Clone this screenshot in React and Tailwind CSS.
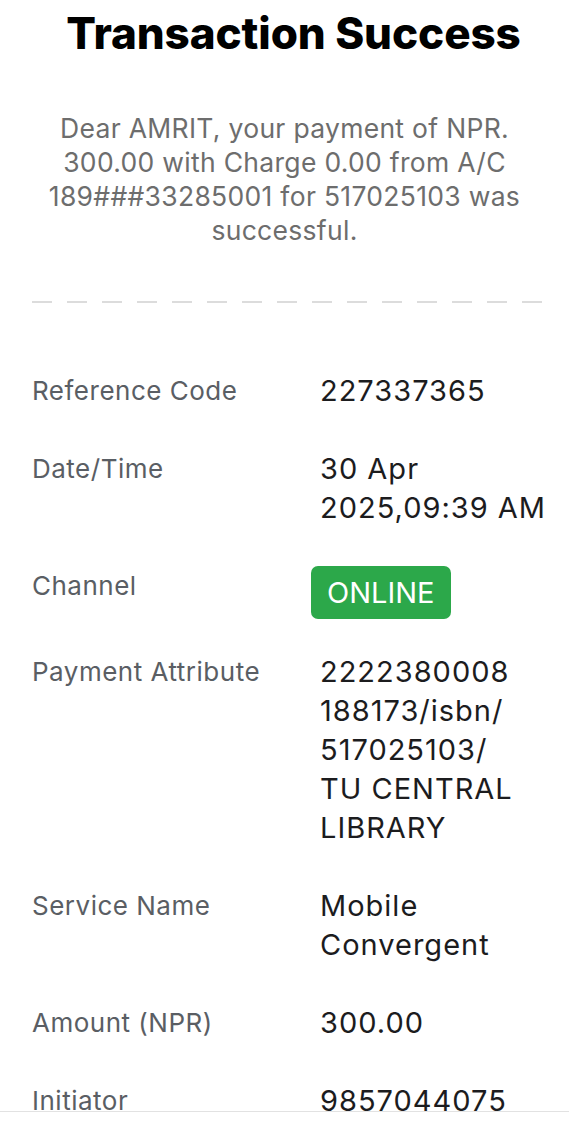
import React from 'react';

const rows = [
    { label: 'Reference Code', value: '227337365' },
    { label: 'Date/Time', value: '30 Apr 2025,09:39 AM' },
    { label: 'Channel', badge: 'ONLINE' },
    { label: 'Payment Attribute', lines: ['2222380008', '188173/isbn/', '517025103/', 'TU CENTRAL', 'LIBRARY'] },
    { label: 'Service Name', value: 'Mobile Convergent' },
    { label: 'Amount (NPR)', value: '300.00' },
    { label: 'Initiator', value: '9857044075' },
];

export default function App() {
    return (
        <div className="h-[1133px] flex flex-col bg-white overflow-hidden" style={{ fontFamily: 'Inter, "Liberation Sans", sans-serif' }}>
            <div className="flex-1 overflow-hidden">
                {/* Heading */}
                <h1 className="pt-[8px] pl-[18px] text-center text-[44px] leading-[50px] font-extrabold tracking-[-0.1px] text-black">
                    Transaction Success
                </h1>

                {/* Message */}
                <p className="mt-[53px] px-[34px] text-center text-[26.5px] leading-[34px] tracking-[0.3px] text-[#6d6d6d]">
                    Dear AMRIT, your payment of NPR. 300.00 with Charge 0.00 from A/C 189###33285001 for 517025103 was successful.
                </p>

                {/* Dashed divider */}
                <div className="mt-[54px] ml-[32px] mr-[12px] h-[2px] bg-[repeating-linear-gradient(90deg,#dcdcdc_0px,#dcdcdc_20px,transparent_20px,transparent_35px)]" />

                {/* Details */}
                <div className="mt-[68px] flex flex-col gap-[39px] pl-[32px] pr-[12px]">
                    {rows.map(r => (
                        <div key={r.label} className="flex items-start">
                            <div className="w-[288px] shrink-0 text-[26px] leading-[39px] tracking-[0.5px] text-[#5a5e64]">
                                {r.label}
                            </div>
                            <div className="flex-1 min-w-0 text-[29px] leading-[39px] tracking-[1px] text-[#1c1c1e]">
                                {r.badge ? (
                                    <span className="-ml-[9px] -mb-[6px] inline-flex h-[53px] items-center rounded-[7px] bg-[#2ca84a] px-[16px] tracking-normal text-white">
                                        {r.badge}
                                    </span>
                                ) : r.lines ? (
                                    r.lines.map(l => <div key={l}>{l}</div>)
                                ) : r.value}
                            </div>
                        </div>
                    ))}
                </div>
            </div>

            {/* Bottom bar */}
            <div className="h-[22px] shrink-0 border-t border-[#e2e2e2] bg-white" />
        </div>
    );
}
